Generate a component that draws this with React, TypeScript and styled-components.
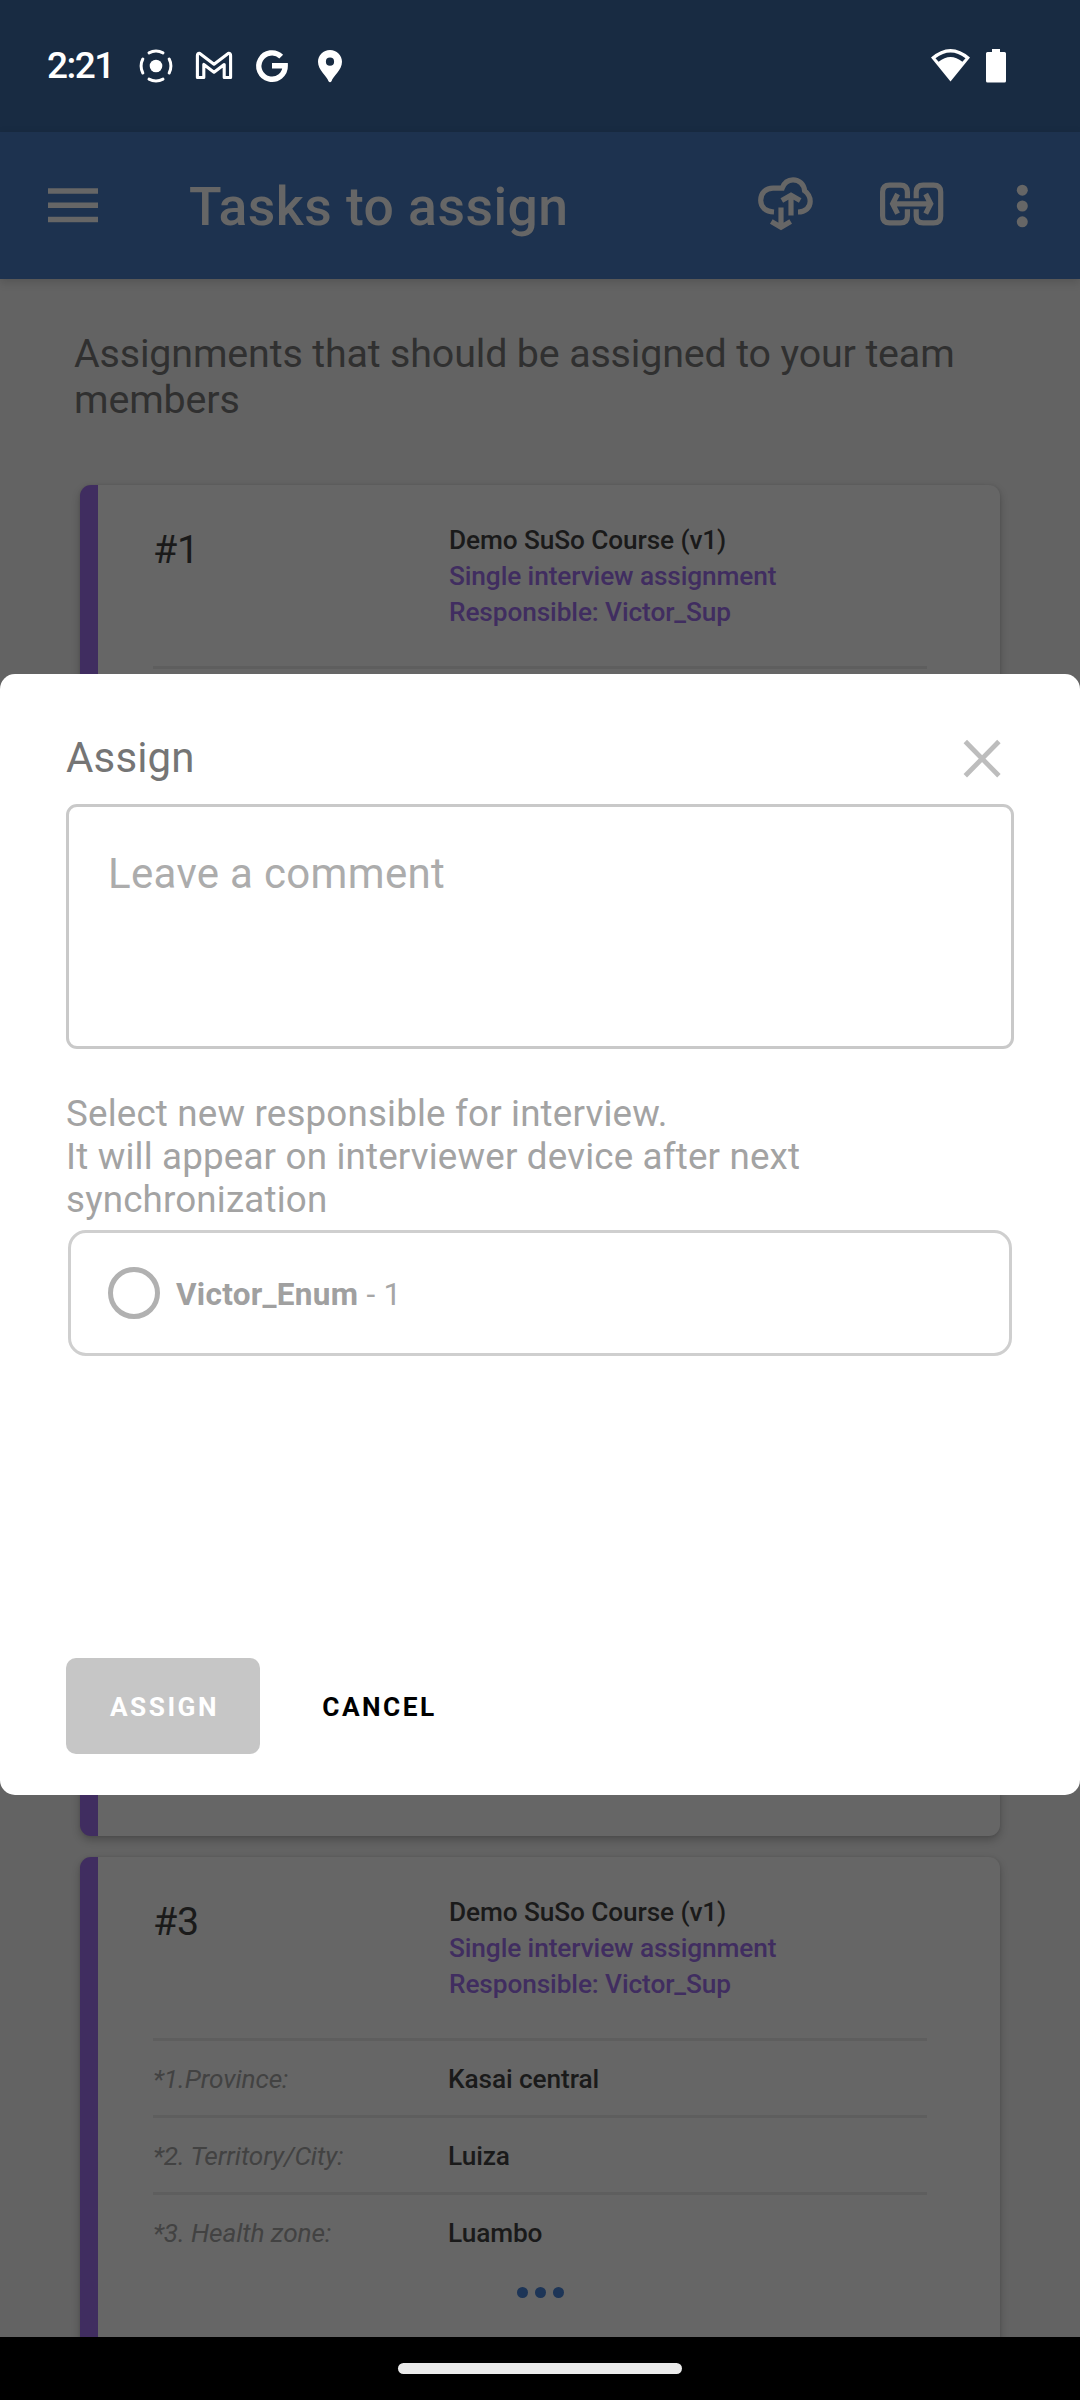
import React from "react";
import styled, { createGlobalStyle } from "styled-components";

const GlobalStyle = createGlobalStyle`
  * { box-sizing: border-box; }
  body { margin: 0; font-family: Roboto, "Noto Sans", sans-serif; background: #000; }
`;

const Screen = styled.div`
  position: relative;
  display: flex;
  flex-direction: column;
  width: 1080px;
  height: 2400px;
  overflow: hidden;
`;

const StatusBar = styled.header`
  flex: none;
  height: 132px;
  padding: 0 74px 0 47px;
  display: flex;
  align-items: center;
  background: #182b42;
  color: #fff;
`;

const Clock = styled.span`
  width: 91px;
  font-size: 37px;
  font-weight: 500;
  line-height: 42px;
  letter-spacing: -1.5px;
`;

const Spacer = styled.div`
  flex: 1;
`;

const Glyph = styled.svg<{ $gap?: number }>`
  display: block;
  flex: none;
  margin-left: ${(p) => p.$gap ?? 0}px;
`;

const Toolbar = styled.div`
  position: relative;
  z-index: 1;
  flex: none;
  height: 147px;
  padding: 0 52px 0 48px;
  display: flex;
  align-items: center;
  background: #1d324f;
  color: #666;
  box-shadow: 0 3px 9px rgba(0, 0, 0, 0.16);
`;

const Title = styled.h1`
  margin: 3px 0 0 91px;
  font-size: 53.5px;
  font-weight: 500;
  line-height: 62px;
  letter-spacing: 0.45px;
  white-space: nowrap;
`;

const Main = styled.main`
  flex: none;
  height: 2058px;
  overflow: hidden;
  padding: 52px 80px 0;
  background: #636363;
`;

const Intro = styled.p`
  margin: 0 -6px 62px;
  height: 92px;
  font-size: 39.4px;
  line-height: 46px;
  letter-spacing: -0.15px;
  color: #303030;
`;

const CardList = styled.div`
  display: flex;
  flex-direction: column;
  gap: 21px;
`;

const Card = styled.article`
  height: 665px;
  padding: 37px 73px 0 55px;
  border-left: 18px solid #402d60;
  border-radius: 11px;
  background: #666;
  box-shadow: 0 4px 8px rgba(0, 0, 0, 0.24), 0 0 3px rgba(0, 0, 0, 0.08);
`;

const CardHeader = styled.div`
  height: 144px;
  display: grid;
  grid-template-columns: 296px 1fr;
`;

const CardNumber = styled.div`
  padding: 5px 0 0;
  font-size: 39.4px;
  line-height: 46px;
  letter-spacing: -0.3px;
  color: #1a1a1a;
`;

const CardLine = styled.div<{ $accent?: boolean }>`
  font-size: 26.25px;
  font-weight: 500;
  line-height: 36px;
  letter-spacing: -0.11px;
  white-space: nowrap;
  color: ${(p) => (p.$accent ? "#402d60" : "#1a1a1a")};
`;

const Rule = styled.div`
  height: 3px;
  background: #5e5e5e;
`;

const Field = styled.div`
  height: 74px;
  padding-top: 2px;
  display: grid;
  grid-template-columns: 295px 1fr;
  align-items: center;
  font-size: 26.25px;
  line-height: 36px;
  letter-spacing: -0.1px;
`;

const FieldLabel = styled.span`
  font-style: italic;
  color: #424242;
  white-space: nowrap;
`;

const FieldValue = styled.span`
  font-weight: 500;
  color: #1a1a1a;
`;

const MoreDots = styled.div`
  height: 46px;
  display: flex;
  align-items: center;
  justify-content: center;
  gap: 7px;
`;

const MoreDot = styled.span`
  width: 11px;
  height: 11px;
  border-radius: 50%;
  background: #1d3557;
`;

const NavBar = styled.footer`
  flex: none;
  height: 63px;
  padding-top: 26px;
  display: flex;
  justify-content: center;
  background: #000;
`;

const HomePill = styled.div`
  width: 284px;
  height: 11px;
  border-radius: 6px;
  background: #ebebeb;
`;

const Dialog = styled.section`
  position: absolute;
  z-index: 2;
  left: 0;
  top: 674px;
  width: 1080px;
  height: 1121px;
  padding: 61px 66px 41px;
  display: flex;
  flex-direction: column;
  border-radius: 15px;
  background: #fff;
`;

const DialogHead = styled.div`
  height: 69px;
  padding: 0 13px 0 0;
  display: flex;
  justify-content: space-between;
  align-items: flex-start;
`;

const DialogTitle = styled.h2`
  margin: -2px 0 0;
  font-size: 42px;
  font-weight: 400;
  line-height: 50px;
  letter-spacing: 0.15px;
  color: #757575;
`;

const CommentBox = styled.div`
  height: 245px;
  padding: 39px;
  border: 3px solid #c9c9c9;
  border-radius: 11px;
  font-size: 42px;
  line-height: 56px;
  letter-spacing: 0.32px;
  color: #acacac;
`;

const Hint = styled.p`
  margin: 43px 0 12px;
  height: 129px;
  font-size: 36.75px;
  line-height: 43px;
  letter-spacing: 0.17px;
  color: #a3a3a3;
`;

const Option = styled.div`
  margin: -3px 2px 0;
  height: 126px;
  padding-left: 37px;
  display: flex;
  align-items: center;
  border: 3px solid #cfcfcf;
  border-radius: 18px;
  font-size: 31.5px;
  line-height: 38px;
  letter-spacing: 0.28px;
  color: #a6a6a6;
`;

const Radio = styled.span`
  width: 52px;
  height: 52px;
  margin-right: 16px;
  border: 5px solid #b1b1b1;
  border-radius: 50%;
`;

const OptionText = styled.span`
  white-space: pre;
  padding-top: 3px;
  b { font-weight: 700; color: #a0a0a0; }
`;

const Actions = styled.div`
  margin-top: auto;
  display: flex;
`;

const Button = styled.button<{ $primary?: boolean }>`
  height: 96px;
  width: 194px;
  margin-right: ${(p) => (p.$primary ? 21 : 0)}px;
  padding: 2px 0 0 3px;
  border: 0;
  border-radius: 10px;
  background: ${(p) => (p.$primary ? "#c6c6c6" : "transparent")};
  color: ${(p) => (p.$primary ? "#fff" : "#000")};
  font: 700 26.25px/32px Roboto, sans-serif;
  letter-spacing: 2.5px;
`;

type CardData = { id: number; fields: [string, string][] };

const cards: CardData[] = [
  { id: 1, fields: [] },
  { id: 2, fields: [] },
  {
    id: 3,
    fields: [
      ["*1.Province:", "Kasai central"],
      ["*2. Territory/City:", "Luiza"],
      ["*3. Health zone:", "Luambo"],
    ],
  },
];

function AssignmentCard({ data }: { data: CardData }) {
  return (
    <Card>
      {data.id !== 2 && (
        <>
          <CardHeader>
            <CardNumber>#{data.id}</CardNumber>
            <div>
              <CardLine>Demo SuSo Course (v1)</CardLine>
              <CardLine $accent>Single interview assignment</CardLine>
              <CardLine $accent>Responsible: Victor_Sup</CardLine>
            </div>
          </CardHeader>
          {data.fields.length === 0 && <Rule />}
        </>
      )}
      {data.fields.map(([label, value]) => (
        <React.Fragment key={label}>
          <Rule />
          <Field>
            <FieldLabel>{label}</FieldLabel>
            <FieldValue>{value}</FieldValue>
          </Field>
        </React.Fragment>
      ))}
      {data.fields.length > 0 && (
        <MoreDots>
          <MoreDot />
          <MoreDot />
          <MoreDot />
        </MoreDots>
      )}
    </Card>
  );
}

export default function App() {
  return (
    <>
      <GlobalStyle />
      <Screen>
        <StatusBar>
          <Clock>2:21</Clock>
          <Glyph width="36" height="36" viewBox="138 49 36 36" fill="none" stroke="#fff" strokeWidth="3">
            <circle cx="156" cy="67" r="6.3" fill="#fff" stroke="none" />
            <circle cx="156" cy="67" r="14.9" strokeLinecap="round" pathLength="360" strokeDasharray="56 34" strokeDashoffset="28" />
          </Glyph>
          <Glyph $gap={20} width="40" height="36" viewBox="194 49 40 36" fill="none" stroke="#fff" strokeWidth="3.1" strokeLinejoin="round">
            <path d="M199.500 54.200L214 65.200L228.500 54.200Q230.600 54 230.600 56.500V78.500H224.200V65.500L214 73.200L203.800 65.500V78.500H197.400V56.500Q197.400 54 199.500 54.200Z" />
          </Glyph>
          <Glyph $gap={20} width="36" height="36" viewBox="254 49 36 36" fill="none" stroke="#fff" strokeWidth="5.4">
            <path d="M281.200 57.600A13.200 13.200 0 1 0 285.200 66.700H272" />
          </Glyph>
          <Glyph $gap={26} width="28" height="36" viewBox="316 49 28 36" fill="#fff">
            <path fillRule="evenodd" d="M330 51C323.300 51 318 56.200 318 62.800C318 71.500 327 77 328.500 82.200Q330 84.300 331.500 82.200C333 77 342 71.500 342 62.800C342 56.200 336.700 51 330 51ZM330 58.600A4 4 0 1 1 330 66.800A4 4 0 1 1 330 58.600Z" />
          </Glyph>
          <Spacer />
          <Glyph width="42" height="36" viewBox="930 48 42 36">
            <path fill="#fff" fillRule="evenodd" d="M931 57.500Q950.500 40.500 970 57.500L950.500 81.500ZM935.500 58.200L938.600 61.800Q950.500 52.300 962.400 61.800L965.500 58.200Q950.500 46.600 935.500 58.200Z" />
          </Glyph>
          <Glyph $gap={14} width="20" height="36" viewBox="986 48 20 36" fill="#fff">
            <path d="M992 49H1000V52H1004.500Q1006 52 1006 53.500V81Q1006 82.600 1004.500 82.600H987.500Q986 82.600 986 81V53.500Q986 52 987.500 52H992Z" />
          </Glyph>
        </StatusBar>

        <Toolbar>
          <Glyph width="50" height="60" viewBox="48 175.500 50 60" stroke="#666" strokeWidth="5.500">
            <path d="M48 190.500H98M48 204.700H98M48 218.900H98" />
          </Glyph>
          <Title>Tasks to assign</Title>
          <Spacer />
          <Glyph width="60" height="60" viewBox="756 175.500 60 60" fill="none" stroke="#666" strokeWidth="5.200">
            <path d="M774 211.500C765.500 211 760.700 206.500 760.700 199.800C760.700 192.300 766 187.600 773 187.600H782.200C784 182.500 788 179.300 793 179.300C799.500 179.300 804 184 804.600 190.300C808.500 193.300 810.200 197 810.200 200.800C810.200 207 805.500 211.500 798 211.500" />
            <path d="M791 215V195M781.800 200L791 194.800L800.200 200M781 207V226M771.300 221L781 226.800L790.700 221" />
          </Glyph>
          <Glyph $gap={62} width="68" height="60" viewBox="878 175.500 68 60" fill="none" stroke="#666" strokeWidth="5.200">
            <path d="M907.400 197.700V191.600Q907.400 184.600 900.400 184.600H889.600Q882.600 184.600 882.600 191.600V215.400Q882.600 222.400 889.600 222.400H900.400Q907.400 222.400 907.400 215.400V208.700M916.200 197.700V191.600Q916.200 184.600 923.200 184.600H933.700Q940.700 184.600 940.700 191.600V215.400Q940.700 222.400 933.700 222.400H923.200Q916.200 222.400 916.200 215.400V208.700M893 203.300H930.500M897.600 193.500L892.600 203.300L897.600 213.200M925.700 193.500L930.700 203.300L925.700 213.200" />
          </Glyph>
          <Glyph $gap={70} width="12" height="60" viewBox="1016 175.500 12 60" fill="#666">
            <circle cx="1022.300" cy="189.700" r="5.500" />
            <circle cx="1022.300" cy="205.500" r="5.500" />
            <circle cx="1022.300" cy="221.300" r="5.500" />
          </Glyph>
        </Toolbar>

        <Main>
          <Intro>Assignments that should be assigned to your team members</Intro>
          <CardList>
            {cards.map((c) => (
              <AssignmentCard key={c.id} data={c} />
            ))}
          </CardList>
        </Main>

        <NavBar>
          <HomePill />
        </NavBar>

        <Dialog>
          <DialogHead>
            <DialogTitle>Assign</DialogTitle>
            <Glyph width="38" height="48" viewBox="963.500 735 38 48" stroke="#bdbdbd" strokeWidth="4.800">
              <path d="M965.800 741.500L999.400 775.800M999.400 741.500L965.800 775.800" />
            </Glyph>
          </DialogHead>
          <CommentBox>Leave a comment</CommentBox>
          <Hint>
            Select new responsible for interview.
            <br />
            It will appear on interviewer device after next synchronization
          </Hint>
          <Option>
            <Radio />
            <OptionText>
              <b>Victor_Enum</b> - 1
            </OptionText>
          </Option>
          <Actions>
            <Button $primary>ASSIGN</Button>
            <Button>CANCEL</Button>
          </Actions>
        </Dialog>
      </Screen>
    </>
  );
}
